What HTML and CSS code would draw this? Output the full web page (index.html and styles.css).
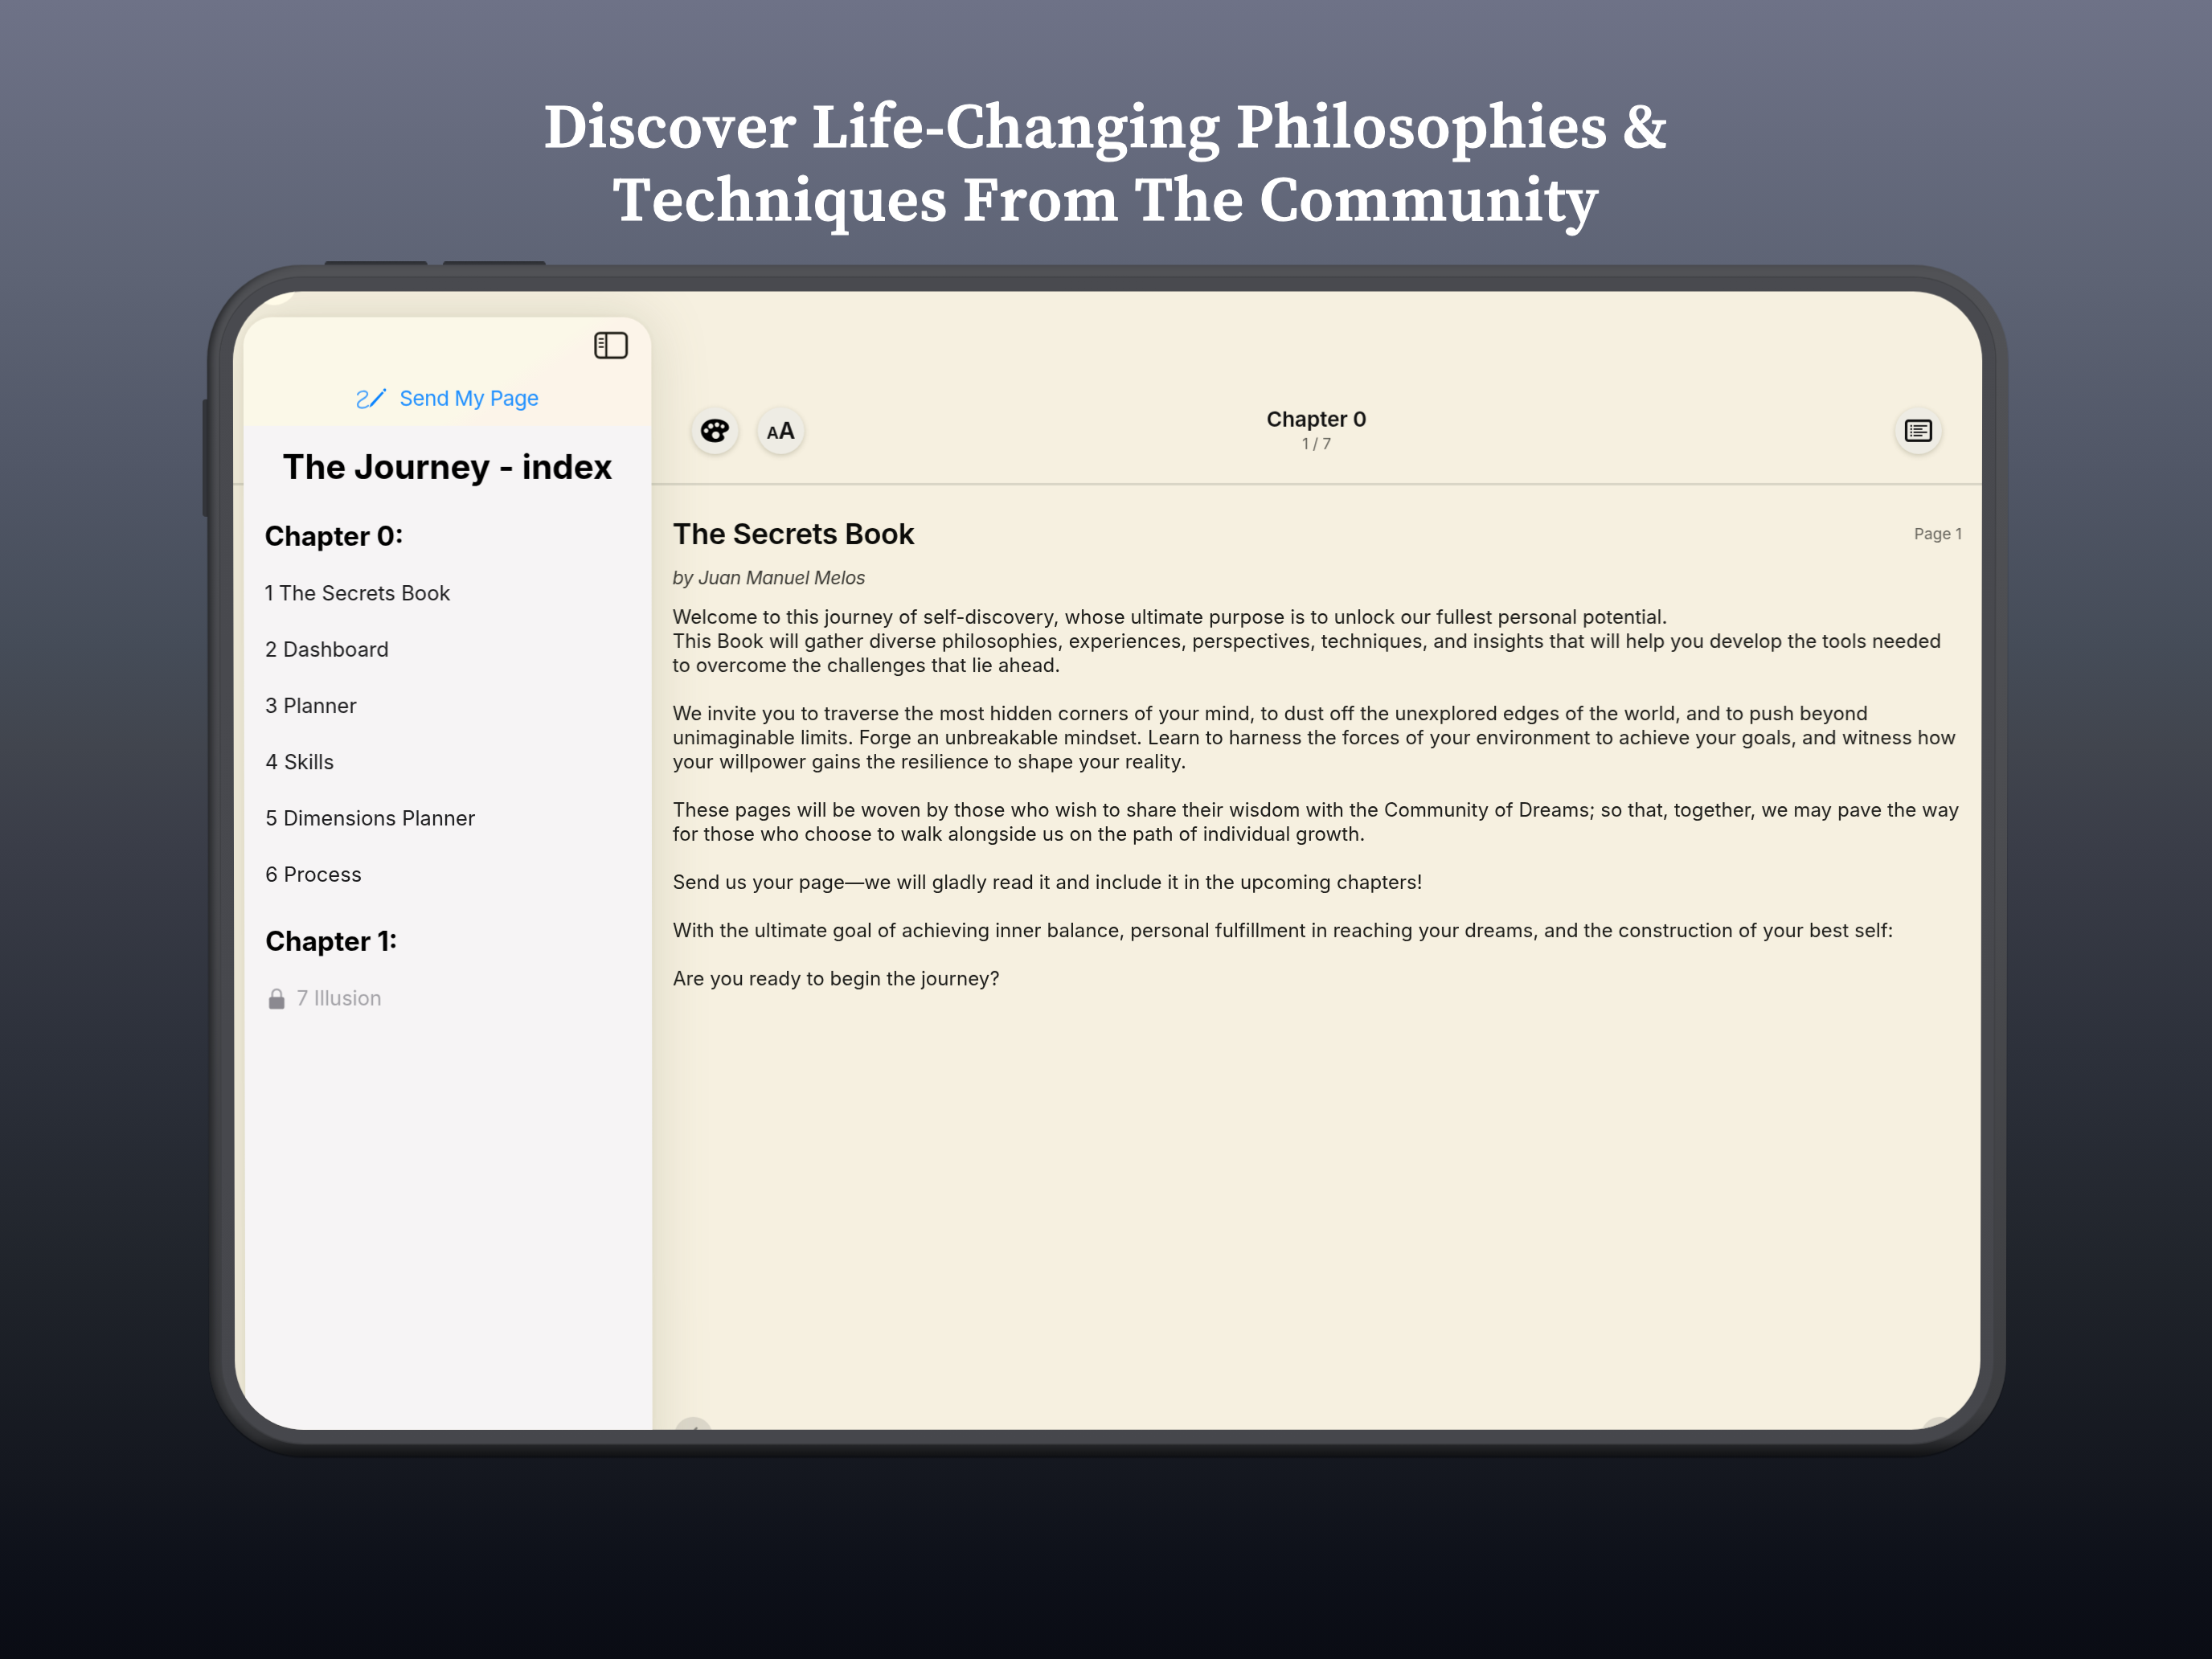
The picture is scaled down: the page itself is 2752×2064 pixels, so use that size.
FILE: index.html
```html
<!DOCTYPE html>
<html lang="en">
<head>
  <meta charset="UTF-8">
  <title>The Journey</title>
  <link rel="stylesheet" href="styles.css">
</head>
<body>

  <h1 class="headline">
    <span>Discover Life-Changing Philosophies &amp;</span>
    <span>Techniques From The Community</span>
  </h1>

  <div class="tablet">
    <div class="side-btn vol-up"></div>
    <div class="side-btn vol-down"></div>
    <div class="side-btn power"></div>
    <div class="frame">
      <div class="bezel">
        <div class="screen">

          <div class="side-column">
            <div class="corner-spot"></div>
            <aside class="sidebar">
              <div class="sidebar-head">
                <svg class="icon-sidebar" viewBox="0 0 42 34">
                  <rect x="1.7" y="1.7" width="38.6" height="30.6" rx="5.5" fill="none" stroke="#1d1b14" stroke-width="3"/>
                  <path d="M15 2v30" stroke="#1d1b14" stroke-width="2.6"/>
                  <path d="M6.500 9h4.500M6.500 14h4.500M6.500 19h4.500" stroke="#1d1b14" stroke-width="2.2" stroke-linecap="round"/>
                </svg>
                <div class="send">
                  <svg class="icon-pencil" viewBox="0 0 38 28">
                    <path d="M2 9C4 4.500 14 3 14 8.500C14 14.500 2 15 2 21.500C2 27 11 26.500 15 23" fill="none" stroke="#4aa3fb" stroke-width="2.2" stroke-linecap="round"/>
                    <path d="M16.500 25.200l1.600-4.800L32.400 5.200l2.100 1.900L20.500 22.800z" fill="#0a84ff"/>
                    <path d="M33.300 3.400l1.200-1.300q1.200-1 2.300 0t.2 2.300l-1.200 1.300z" fill="#0a84ff"/>
                  </svg>
                  <span>Send My Page</span>
                </div>
              </div>
              <div class="sidebar-body">
                <h2 class="index-title">The Journey - index</h2>
                <h3 class="chapter">Chapter 0:</h3>
                <ul class="entries">
                  <li>1 The Secrets Book</li>
                  <li>2 Dashboard</li>
                  <li>3 Planner</li>
                  <li>4 Skills</li>
                  <li>5 Dimensions Planner</li>
                  <li>6 Process</li>
                </ul>
                <h3 class="chapter">Chapter 1:</h3>
                <ul class="entries">
                  <li class="locked">
                    <svg class="icon-lock" viewBox="0 0 20 27">
                      <path d="M4.500 13V7.500a5.500 5.500 0 0 1 11 0V13" fill="none" stroke="#a9a8ad" stroke-width="2.400"/>
                      <rect x="0.500" y="11.500" width="19" height="15" rx="2.800" fill="#8b8990"/>
                    </svg>
                    <span>7 Illusion</span>
                  </li>
                </ul>
              </div>
            </aside>
          </div>

          <main class="reader">
            <header class="toolbar">
              <div class="tools">
                <button class="round">
                  <svg class="icon-palette" viewBox="0 0 36 30">
                    <path fill-rule="evenodd" fill="#000" d="M18 .5C27.500 .5 35.500 5 35.500 11C35.500 15.500 31 16.500 28.500 17.500C26.500 18.500 27.500 20 29 21.500C31.500 25.500 26 29.500 18.500 29.500C8 29.500 .5 23.500 .5 15C.5 6.500 8 .5 18 .5zM12.700 6a3.200 3.300 0 1 0 .01 0zM20.500 4.500a2.900 3 0 1 0 .01 0zM27.500 7.200a2.400 2.500 0 1 0 .01 0zM7 12a2.800 3 0 1 0 .01 0zM19 16a4.700 4.500 0 1 0 .01 0z"/>
                  </svg>
                </button>
                <button class="round letters"><span class="small-a">A</span><span class="big-a">A</span></button>
              </div>
              <div class="heading">
                <div class="heading-title">Chapter 0</div>
                <div class="heading-count">1 / 7</div>
              </div>
              <div class="tools tools-right">
                <button class="round">
                  <svg class="icon-list" viewBox="0 0 34 28">
                    <rect x="1.600" y="1.600" width="30.800" height="24.800" rx="3" fill="none" stroke="#111" stroke-width="3.200"/>
                    <path d="M11.500 8h15.500M11.500 12h9.500M11.500 16h15.500M11.500 20h9.500" stroke="#222" stroke-width="1.900" stroke-linecap="round"/>
                    <path d="M7.800 8h.1M7.800 12h.1M7.800 16h.1M7.800 20h.1" stroke="#222" stroke-width="2.400" stroke-linecap="round"/>
                  </svg>
                </button>
              </div>
            </header>

            <article class="page">
              <div class="page-head">
                <h2 class="page-title">The Secrets Book</h2>
                <span class="page-no">Page 1</span>
              </div>
              <div class="author">by Juan Manuel Melos</div>
              <p>Welcome to this journey of self-discovery, whose ultimate purpose is to unlock our fullest personal potential.<br>
              This Book will gather diverse philosophies, experiences, perspectives, techniques, and insights that will help you develop the tools needed<br>
              to overcome the challenges that lie ahead.</p>
              <p>We invite you to traverse the most hidden corners of your mind, to dust off the unexplored edges of the world, and to push beyond<br>
              unimaginable limits. Forge an unbreakable mindset. Learn to harness the forces of your environment to achieve your goals, and witness how<br>
              your willpower gains the resilience to shape your reality.</p>
              <p>These pages will be woven by those who wish to share their wisdom with the Community of Dreams; so that, together, we may pave the way<br>
              for those who choose to walk alongside us on the path of individual growth.</p>
              <p>Send us your page—we will gladly read it and include it in the upcoming chapters!</p>
              <p>With the ultimate goal of achieving inner balance, personal fulfillment in reaching your dreams, and the construction of your best self:</p>
              <p>Are you ready to begin the journey?</p>
            </article>

            <div class="page-nav prev">
              <svg class="icon-chevron" viewBox="0 0 12 20"><path d="M10 2L2 10l8 8" fill="none" stroke="#85827a" stroke-width="2.500" stroke-linecap="round"/></svg>
            </div>
            <div class="page-nav next"></div>
          </main>

        </div>
      </div>
    </div>
  </div>

</body>
</html>
```

FILE: styles.css
```css
* {
  box-sizing: border-box;
}
body {
  margin: 0;
  width: 2752px;
  height: 2064px;
  overflow: hidden;
  background: linear-gradient(#6e7287 0%, #5d6374 17%, #515767 28%, #454c58 39%, #41454e 45%, #3a3d48 51%, #2c303a 64%, #20242b 76.5%, #14171f 89%, #0d1019 95%, #0a0c14 100%);
  font-family: Inter, "Liberation Sans", sans-serif;
  color: #1b1b18;
}
h1, h2, h3, p, ul {
  margin: 0;
  padding: 0;
}
.headline {
  height: 330px;
  padding-top: 111px;
  text-align: center;
  color: #fff;
  font-family: "Source Serif 4", "Source Serif Pro", "Liberation Serif", serif;
  font-kerning: none;
  font-size: 77px;
  font-weight: 600;
  letter-spacing: 1.05px;
  line-height: 91px;
  white-space: nowrap;
  -webkit-text-stroke: 1.2px #fff;
}
.headline span {
  display: block;
}

/* tablet body */
.tablet {
  position: relative;
  width: 2238px;
  height: 1483px;
  margin-left: 258.5px;
  transform: perspective(20000px) rotateX(-1.95deg);
}
.frame {
  position: relative;
  height: 100%;
  padding: 16px;
  border-radius: 118px;
  background: linear-gradient(#515256 0%, #4b4c50 50%, #3c3d40 96%, #2f3033 98.5%, #121315 100%);
  box-shadow: inset 9px 0 10px -4px rgba(22, 23, 26, 0.7), 0 2px 2px rgba(0, 0, 0, 0.45);
}
.bezel {
  height: 100%;
  padding: 17px 16px;
  border-radius: 102px;
  background: linear-gradient(#494a4f, #46474c);
  box-shadow: 0 0 0 1.5px #3f4044;
}
.side-btn {
  position: absolute;
  background: linear-gradient(#2c2e33, #44464b);
  border-radius: 4px;
}
.vol-up {
  left: 146px;
  top: -4px;
  width: 128px;
  height: 10px;
}
.vol-down {
  left: 293px;
  top: -4px;
  width: 128px;
  height: 10px;
}
.power {
  left: -6px;
  top: 167px;
  width: 12px;
  height: 146px;
  background: #33353a;
}

.screen {
  display: flex;
  height: 100%;
  overflow: hidden;
  border-radius: 86px;
  background: #f6f0e0;
}

/* index */
.side-column {
  position: relative;
  width: 520px;
  padding: 32px 0 0 13px;
}
.corner-spot {
  position: absolute;
  z-index: 2;
  left: 22px;
  top: -41px;
  width: 58px;
  height: 58px;
  border-radius: 50%;
  background: #fffbe8;
}
.sidebar {
  position: relative;
  z-index: 1;
  height: 1450px;
  border-radius: 36px 36px 0 0;
  overflow: hidden;
  box-shadow: 0 0 70px rgba(120, 125, 90, 0.23), 0 0 8px rgba(120, 125, 90, 0.08);
}
.sidebar-head {
  display: flex;
  flex-direction: column;
  height: 135px;
  padding-top: 18px;
  background: linear-gradient(145deg, #fbf8e8 62%, #fcf4e9 68%);
}
.icon-sidebar {
  align-self: flex-end;
  width: 42px;
  height: 34px;
  margin-right: 29px;
}
.send {
  display: flex;
  align-items: center;
  justify-content: center;
  gap: 16px;
  margin-top: 33px;
  color: #1e8fff;
  font-size: 26px;
  letter-spacing: -0.45px;
  line-height: 32px;
}
.icon-pencil {
  width: 38px;
  height: 28px;
}
.sidebar-body {
  height: 1300px;
  padding: 25px 24px 0 26px;
  background: #f6f4f5;
}
.index-title {
  margin-left: -2px;
  padding-bottom: 11px;
  text-align: center;
  color: #000;
  font-size: 42px;
  font-weight: 700;
  line-height: 52px;
}
.chapter {
  padding: 14.5px 0 2px;
  color: #000;
  font-size: 33.4px;
  font-weight: 700;
  line-height: 68px;
}
.entries {
  list-style: none;
  color: #1c1c1e;
  font-size: 25.5px;
  line-height: 70px;
}
.entries .locked {
  display: flex;
  align-items: center;
  gap: 15px;
  padding-left: 4px;
  color: #a3a2a7;
}
.icon-lock {
  width: 20px;
  height: 27px;
}

/* reader */
.reader {
  position: relative;
  flex: 1;
}
.toolbar {
  display: grid;
  grid-template-columns: 1fr auto 1fr;
  align-items: end;
  height: 241px;
  margin-left: -520px;
  padding: 0 50px 36px 570px;
  border-bottom: 3px solid #d9d5c6;
}
.tools {
  display: flex;
  gap: 24px;
}
.tools-right {
  justify-content: flex-end;
}
.round {
  display: flex;
  align-items: center;
  justify-content: center;
  width: 58px;
  height: 58px;
  padding: 0;
  border: none;
  border-radius: 50%;
  background: #eeece4;
  box-shadow: 0 2px 6px rgba(90, 90, 60, 0.28);
}
.icon-palette {
  width: 36px;
  height: 30px;
}
.letters {
  align-items: baseline;
  color: #111;
  font-family: Inter, sans-serif;
  font-weight: 600;
  line-height: 58px;
}
.small-a {
  font-size: 20.5px;
}
.big-a {
  font-size: 28.5px;
}
.icon-list {
  width: 34px;
  height: 28px;
}
.heading {
  text-align: center;
}
.heading-title {
  color: #111;
  font-size: 26px;
  font-weight: 600;
  line-height: 32px;
}
.heading-count {
  margin-bottom: -3px;
  color: #66645c;
  font-size: 19px;
  line-height: 30px;
}
.page {
  padding: 37px 25px 0 26px;
  font-size: 24px;
  letter-spacing: 0.06px;
  line-height: 30px;
  white-space: nowrap;
}
.page-head {
  display: flex;
  align-items: center;
  justify-content: space-between;
}
.page-title {
  color: #0c0c0a;
  font-size: 36px;
  font-weight: 600;
  letter-spacing: -0.3px;
  line-height: 46px;
}
.page-no {
  padding-top: 2px;
  color: #66645c;
  font-size: 19px;
}
.author {
  margin: 17px 0 18.5px;
  color: #3d3c37;
  font-size: 23px;
  font-style: italic;
  letter-spacing: -0.35px;
  line-height: 30px;
}
.page p {
  margin-bottom: 30px;
}
.page-nav {
  position: absolute;
  bottom: -32px;
  width: 48px;
  height: 48px;
  padding: 12px 18px;
  border-radius: 50%;
  background: #dcd7ca;
}
.prev {
  left: 27px;
}
.next {
  right: 26px;
}
.icon-chevron {
  display: block;
  width: 12px;
  height: 20px;
}
```
